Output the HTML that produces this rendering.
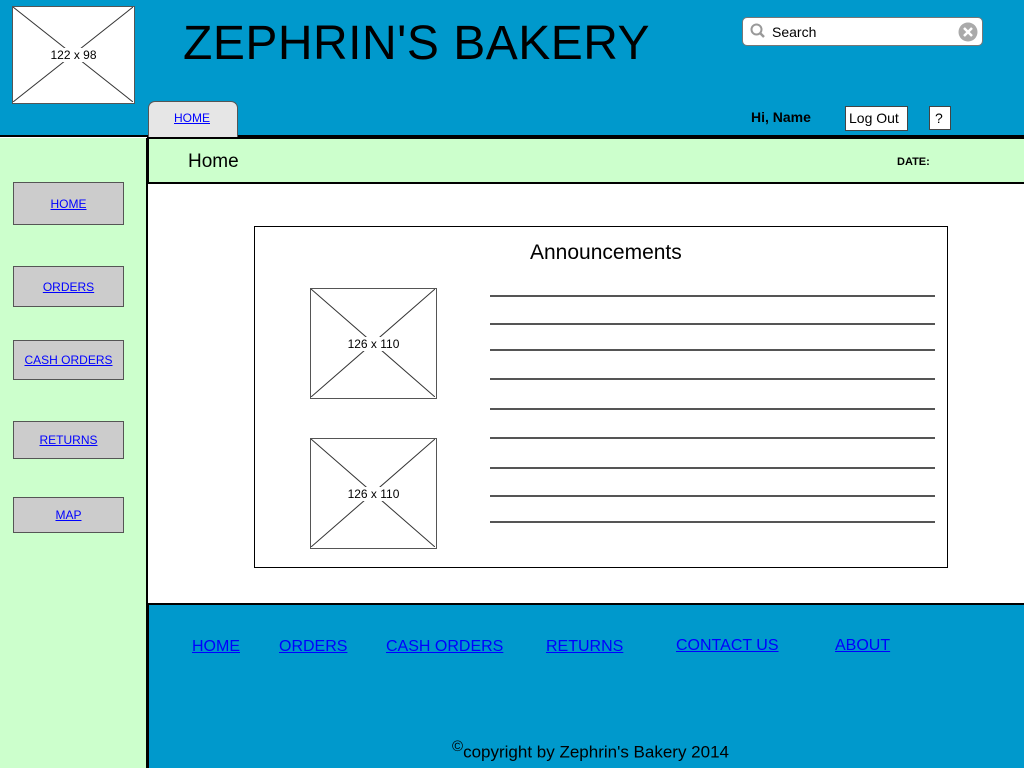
<!DOCTYPE html>
<html><head><meta charset="utf-8"><style>
*{margin:0;padding:0;box-sizing:border-box}
body{width:1024px;height:768px;position:relative;overflow:hidden;background:#fff;font-family:"Liberation Sans","DejaVu Sans",sans-serif}
.a{position:absolute}
a{color:#0000ff;text-decoration:underline}
.ph{position:absolute;background:#fff;border:1.5px solid #555}
.ph svg{position:absolute;left:0;top:0}
.ph span{position:absolute;left:0;right:0;top:50%;transform:translateY(-50%);text-align:center;font-size:12px;color:#000}
.ph span b{background:#fff;font-weight:normal;padding:0 2px}
.btn{position:absolute;left:13px;width:111px;background:#ccc;border:1.5px solid #555;display:flex;align-items:center;justify-content:center;font-size:12px}
.ln{position:absolute;left:490px;width:445px;height:2px;background:#555}
.fl{position:absolute;top:638px;font-size:16px}
</style></head><body>
<div class="a" style="left:0;top:0;width:1024px;height:137px;background:#0099cc;border-bottom:2px solid #000"></div>
<div class="ph" style="left:12px;top:6px;width:123px;height:98px"><svg width="120" height="95"><line x1="0" y1="0" x2="120" y2="95" stroke="#333"/><line x1="120" y1="0" x2="0" y2="95" stroke="#333"/></svg><span><b>122 x 98</b></span></div>
<div class="a" style="left:183px;top:16px;font-size:48px;letter-spacing:0.5px;color:#000;white-space:nowrap">ZEPHRIN'S BAKERY</div>
<div class="a" style="left:742px;top:17px;width:241px;height:29px;background:#fff;border:1.5px solid #777;border-radius:5px"></div>
<svg class="a" style="left:750px;top:23px" width="16" height="16"><circle cx="6.5" cy="6.5" r="5" fill="none" stroke="#999" stroke-width="2"/><line x1="10" y1="10" x2="14" y2="14" stroke="#999" stroke-width="2.5"/></svg>
<div class="a" style="left:772px;top:24px;font-size:14px">Search</div>
<svg class="a" style="left:958px;top:22px" width="20" height="20"><circle cx="10" cy="10" r="9.5" fill="#aaa"/><path d="M6 6L14 14M14 6L6 14" stroke="#fff" stroke-width="2.5"/></svg>
<div class="a" style="left:148px;top:101px;width:90px;height:36px;background:#e6e6e6;border:1.5px solid #555;border-bottom:none;border-radius:7px 7px 0 0"></div>
<a class="a" style="left:174px;top:111px;font-size:12px">HOME</a>
<div class="a" style="left:751px;top:109px;font-size:14px;font-weight:bold">Hi, Name</div>
<div class="a" style="left:845px;top:106px;width:63px;height:25px;background:#fff;border:1.5px solid #444;font-size:14px;padding:3px 0 0 3px">Log Out</div>
<div class="a" style="left:929px;top:106px;width:22px;height:24px;background:#fff;border:1.5px solid #444;font-size:14px;padding:3px 0 0 5px">?</div>
<div class="a" style="left:0;top:138px;width:148px;height:630px;background:#ccffcc;border-right:2px solid #000"></div>
<div class="a" style="left:147px;top:137px;width:877px;height:47px;background:#ccffcc;border:2px solid #000;border-right:none"></div>
<div class="a" style="left:188px;top:151px;font-size:19px">Home</div>
<div class="a" style="left:897px;top:156px;font-size:11px;font-weight:bold">DATE:</div>
<div class="btn" style="top:182px;height:43px"><a>HOME</a></div>
<div class="btn" style="top:266px;height:41px"><a>ORDERS</a></div>
<div class="btn" style="top:340px;height:40px"><a>CASH ORDERS</a></div>
<div class="btn" style="top:421px;height:38px"><a>RETURNS</a></div>
<div class="btn" style="top:497px;height:36px"><a>MAP</a></div>
<div class="a" style="left:254px;top:226px;width:694px;height:342px;border:1px solid #000"></div>
<div class="a" style="left:530px;top:241px;font-size:21px">Announcements</div>
<div class="ph" style="left:310px;top:288px;width:127px;height:111px"><svg width="124" height="108"><line x1="0" y1="0" x2="124" y2="108" stroke="#333"/><line x1="124" y1="0" x2="0" y2="108" stroke="#333"/></svg><span><b>126 x 110</b></span></div>
<div class="ph" style="left:310px;top:438px;width:127px;height:111px"><svg width="124" height="108"><line x1="0" y1="0" x2="124" y2="108" stroke="#333"/><line x1="124" y1="0" x2="0" y2="108" stroke="#333"/></svg><span><b>126 x 110</b></span></div>
<div class="ln" style="top:295px"></div><div class="ln" style="top:323px"></div><div class="ln" style="top:349px"></div>
<div class="ln" style="top:378px"></div><div class="ln" style="top:408px"></div><div class="ln" style="top:437px"></div>
<div class="ln" style="top:467px"></div><div class="ln" style="top:495px"></div><div class="ln" style="top:521px"></div>
<div class="a" style="left:147px;top:603px;width:877px;height:165px;background:#0099cc;border-top:2px solid #000;border-left:2px solid #000"></div>
<a class="fl" style="left:192px">HOME</a>
<a class="fl" style="left:279px">ORDERS</a>
<a class="fl" style="left:386px">CASH ORDERS</a>
<a class="fl" style="left:546px">RETURNS</a>
<a class="fl" style="left:676px;top:637px">CONTACT US</a>
<a class="fl" style="left:835px;top:637px">ABOUT</a>
<div class="a" style="left:452px;top:738px;font-size:17px;white-space:nowrap"><sup style="font-size:15px">©</sup>copyright by Zephrin's Bakery 2014</div>
</body></html>
